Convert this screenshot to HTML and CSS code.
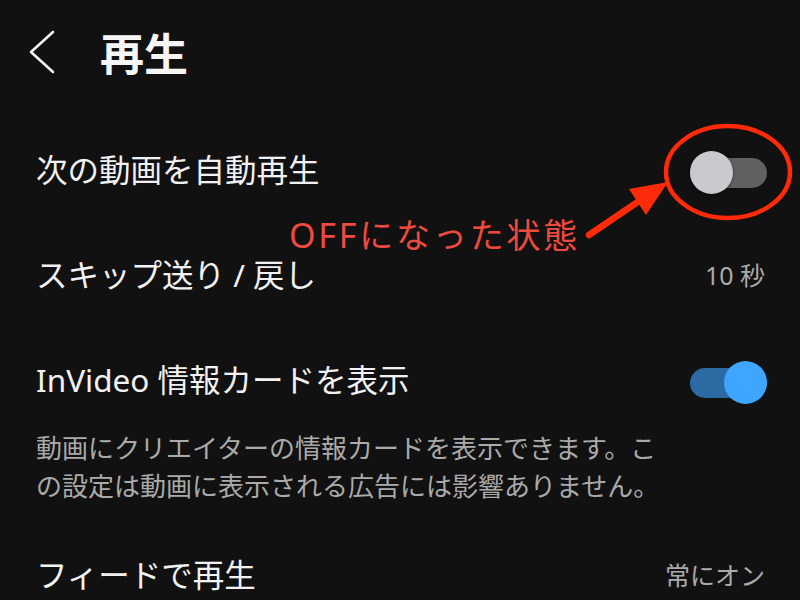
FILE: index.html
```html
<!DOCTYPE html>
<html lang="ja">
<head>
<meta charset="utf-8">
<title>再生</title>
<link rel="stylesheet" href="styles.css">
</head>
<body>
<div class="page">
  <header class="header">
    <svg class="back" width="28" height="44" viewBox="0 0 28 44" aria-hidden="true">
      <polyline points="24,2 2,22 24,42" fill="none" stroke="#f1f1f1" stroke-width="2.6" stroke-linecap="round" stroke-linejoin="round"/>
    </svg>
    <h1 class="title">再生</h1>
  </header>

  <div class="row row-first">
    <span class="label">次の動画を自動再生</span>
    <span class="toggle toggle-off"><span class="knob"></span></span>
  </div>

  <div class="row">
    <span class="label">スキップ送り / 戻し</span>
    <span class="value">10 秒</span>
  </div>

  <div class="row row-toggle">
    <span class="label">InVideo 情報カードを表示</span>
    <span class="toggle toggle-on"><span class="knob"></span></span>
  </div>
  <p class="desc">動画にクリエイターの情報カードを表示できます。この設定は動画に表示される広告には影響ありません。</p>

  <div class="row">
    <span class="label">フィードで再生</span>
    <span class="value">常にオン</span>
  </div>

  <svg class="annot-shapes" width="800" height="600" viewBox="0 0 800 600" aria-hidden="true">
    <ellipse cx="728" cy="172" rx="62" ry="46" fill="none" stroke="#ff2a0a" stroke-width="4.5"/>
    <line x1="589" y1="235" x2="642" y2="199" stroke="#ff2a0a" stroke-width="6.5" stroke-linecap="round"/>
    <polygon points="668,182 646,215 629,189" fill="#ff2a0a"/>
  </svg>
  <span class="annot-text">OFFになった状態</span>
</div>
</body>
</html>
```

FILE: styles.css
```css
html, body {
  margin: 0;
  padding: 0;
  background: #111111;
}

body {
  width: 800px;
  height: 600px;
  overflow: hidden;
  font-family: "Noto Sans", "Noto Sans CJK JP", sans-serif;
  color: #f1f1f1;
}

.page {
  position: relative;
  width: 800px;
  height: 600px;
  padding: 0 33px 0 36px;
  box-sizing: border-box;
}

.header {
  height: 104px;
  display: flex;
  align-items: center;
  margin-left: -7px;
}

.back {
  display: block;
  margin-right: 43px;
}

.title {
  margin: 0;
  font-family: "Noto Sans CJK JP", sans-serif;
  font-size: 44px;
  font-weight: 700;
  line-height: 1;
  color: #f5f5f5;
}

.row {
  height: 104px;
  display: flex;
  align-items: center;
  justify-content: space-between;
}

.row-first {
  margin-top: 16px;
  height: 106px;
}

.row-toggle {
  margin-top: 8px;
  height: 90px;
}

.label {
  font-size: 31.5px;
  line-height: 1;
  padding-bottom: 6px;
  color: #f1f1f1;
}

.value {
  font-size: 25px;
  line-height: 1;
  padding-bottom: 6px;
  color: #aaaaaa;
  margin-right: 2px;
}

.desc {
  margin: 0 0 22px;
  width: 630px;
  font-family: "Noto Sans CJK JP", sans-serif;
  font-size: 26px;
  line-height: 38px;
  color: #aaaaaa;
}

.toggle {
  position: relative;
  display: block;
  width: 77px;
  height: 30px;
  border-radius: 15px;
}

.toggle .knob {
  position: absolute;
  top: -7px;
  width: 43px;
  height: 43px;
  border-radius: 50%;
}

.toggle-off {
  background: #616161;
}

.toggle-off .knob {
  left: 0;
  background: #c9cacf;
  box-shadow: 0 1px 3px rgba(0, 0, 0, 0.5);
}

.toggle-on {
  background: #2c6aa3;
}

.toggle-on .knob {
  right: 0;
  background: #3ea6ff;
}

.annot-shapes {
  position: absolute;
  left: 0;
  top: 0;
}

.annot-text {
  position: absolute;
  left: 289px;
  top: 218px;
  font-size: 34px;
  letter-spacing: 2.8px;
  line-height: 1;
  color: #ee4a3f;
}
```
